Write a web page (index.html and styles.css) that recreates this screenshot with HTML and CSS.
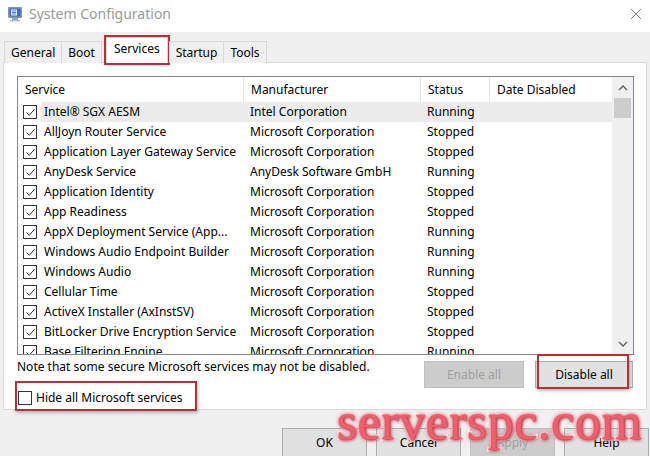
FILE: index.html
```html
<!DOCTYPE html>
<html>
<head>
<meta charset="utf-8">
<link rel="stylesheet" href="styles.css">
</head>
<body>
<div class="window">
  <div class="titlebar">
    <svg class="appicon" width="18" height="18" viewBox="0 0 18 18">
      <rect x="1" y="2" width="14" height="11" rx="1" fill="#8a96a8"/>
      <rect x="2.5" y="3.5" width="11" height="8" fill="#3a6fc4"/>
      <rect x="4" y="4.5" width="6" height="6" fill="#e8eef8"/>
      <line x1="5" y1="6" x2="9" y2="6" stroke="#3a6fc4" stroke-width="0.8"/>
      <line x1="5" y1="7.5" x2="9" y2="7.5" stroke="#3a6fc4" stroke-width="0.8"/>
      <line x1="5" y1="9" x2="9" y2="9" stroke="#3a6fc4" stroke-width="0.8"/>
      <rect x="5" y="13" width="6" height="2" fill="#9aa4b4"/>
      <rect x="3" y="15" width="10" height="1.5" fill="#b8c0cc"/>
    </svg>
    <span class="title">System Configuration</span>
    <svg class="close" width="12" height="12" viewBox="0 0 12 12">
      <path d="M1 1 L11 11 M11 1 L1 11" stroke="#888" stroke-width="1" fill="none"/>
    </svg>
  </div>

  <div class="tabs">
    <div class="tab">General</div>
    <div class="tab">Boot</div>
    <div class="tab selected">Services</div>
    <div class="tab">Startup</div>
    <div class="tab">Tools</div>
  </div>

  <div class="panel">
    <div class="list">
      <div class="listmain">
        <div class="header">
          <div class="hc c1">Service</div>
          <div class="hc c2">Manufacturer</div>
          <div class="hc c3">Status</div>
          <div class="hc c4">Date Disabled</div>
        </div>
        <div class="rows" id="rows"></div>
      </div>
      <div class="scrollbar">
        <div class="sbtn">
          <svg width="10" height="6" viewBox="0 0 10 6"><path d="M1 5 L5 1 L9 5" stroke="#606060" stroke-width="1.3" fill="none"/></svg>
        </div>
        <div class="track"><div class="thumb"></div></div>
        <div class="sbtn">
          <svg width="10" height="6" viewBox="0 0 10 6"><path d="M1 1 L5 5 L9 1" stroke="#606060" stroke-width="1.3" fill="none"/></svg>
        </div>
      </div>
    </div>

    <div class="below">
      <div class="leftcol">
        <div class="note">Note that some secure Microsoft services may not be disabled.</div>
        <div class="hideall">
          <span class="cb"></span>
          <span>Hide all Microsoft services</span>
        </div>
      </div>
      <div class="btns">
        <div class="btn disabled wide">Enable all</div>
        <div class="btn wide">Disable all</div>
      </div>
    </div>

    <div class="mark mark-hide"></div>
    <div class="mark mark-disable"></div>
  </div>

  <div class="footer">
    <div class="btn fbtn">OK</div>
    <div class="btn fbtn">Cancel</div>
    <div class="btn fbtn disabled">Apply</div>
    <div class="btn fbtn">Help</div>
  </div>

  <div class="watermark">serverspc.com</div>
</div>
<script src="script.js"></script>
</body>
</html>
```

FILE: script.js
```js
var data = [
  ["Intel\u00AE SGX AESM", "Intel Corporation", "Running"],
  ["AllJoyn Router Service", "Microsoft Corporation", "Stopped"],
  ["Application Layer Gateway Service", "Microsoft Corporation", "Stopped"],
  ["AnyDesk Service", "AnyDesk Software GmbH", "Running"],
  ["Application Identity", "Microsoft Corporation", "Stopped"],
  ["App Readiness", "Microsoft Corporation", "Stopped"],
  ["AppX Deployment Service (App...", "Microsoft Corporation", "Running"],
  ["Windows Audio Endpoint Builder", "Microsoft Corporation", "Running"],
  ["Windows Audio", "Microsoft Corporation", "Running"],
  ["Cellular Time", "Microsoft Corporation", "Stopped"],
  ["ActiveX Installer (AxInstSV)", "Microsoft Corporation", "Stopped"],
  ["BitLocker Drive Encryption Service", "Microsoft Corporation", "Stopped"],
  ["Base Filtering Engine", "Microsoft Corporation", "Running"]
];
var check = '<svg width="11" height="11" viewBox="0 0 11 11"><path d="M1.5 5.5 L4.3 8.3 L9.5 2.2" stroke="#333" stroke-width="1" fill="none"/></svg>';
var html = "";
data.forEach(function (r, i) {
  html += '<div class="row' + (i === 0 ? ' sel' : '') + '">' +
    '<div class="c1 cell"><span class="cb">' + check + '</span><span class="name">' + r[0] + '</span></div>' +
    '<div class="c2 cell">' + r[1] + '</div>' +
    '<div class="c3 cell">' + r[2] + '</div>' +
    '<div class="c4 cell"></div>' +
    '</div>';
});
document.getElementById("rows").innerHTML = html;
```

FILE: styles.css
```css
* { box-sizing: border-box; }
html, body { margin: 0; padding: 0; }
body {
  width: 650px;
  height: 456px;
  overflow: hidden;
  font-family: "Noto Sans", "Open Sans", sans-serif;
  font-size: 12px;
  color: #000;
  background: #f0f0f0;
}
.window { position: relative; width: 650px; height: 456px; overflow: hidden; }

.titlebar {
  height: 32px;
  background: #fff;
  display: flex;
  align-items: center;
  padding-left: 7px;
}
.appicon { display: block; margin-top: -4px; }
.title {
  margin-left: 4px;
  font-size: 14px;
  color: #9a9a9a;
  margin-top: -5px;
}
.close { margin-left: auto; margin-right: 8px; margin-top: -4px; }

.tabs {
  display: flex;
  align-items: flex-end;
  height: 31px;
  padding-left: 4px;
  position: relative;
  z-index: 2;
  margin-bottom: -1px;
}
.tab {
  height: 22px;
  padding: 0 6px;
  line-height: 22px;
  border: 1px solid #d9d9d9;
  border-bottom: none;
  background: #f0f0f0;
  margin-right: -1px;
}
.tab.selected {
  height: 26px;
  background: #fff;
  margin: 0 1px 0 5px;
  padding: 0 7px;
  line-height: 21px;
  outline: 2px solid #b3303c;
  box-shadow: 1px 2px 3px rgba(0,0,0,0.25);
}

.panel {
  position: relative;
  margin: 0 3px;
  height: 348px;
  background: #fff;
  border: 1px solid #d9d9d9;
  padding: 13px 12px 0 13px;
}

.list {
  width: 617px;
  height: 279px;
  border: 1px solid #828790;
  display: flex;
  overflow: hidden;
}
.listmain { flex: 1; overflow: hidden; }
.header { display: flex; height: 25px; }
.hc {
  padding-left: 7px;
  line-height: 25px;
  border-right: 1px solid #e5e5e5;
}
.hc.c4 { border-right: none; }
.c1 { width: 226px; flex: none; }
.c2 { width: 177px; flex: none; }
.c3 { width: 69px; flex: none; }
.c4 { flex: 1; }

.row { display: flex; height: 20px; line-height: 20px; white-space: nowrap; }
.cell { padding-left: 6px; overflow: hidden; }
.row .c1 { display: flex; align-items: center; padding-left: 5px; }
.row.sel .c2, .row.sel .c3, .row.sel .c4 { background: #ececec; }
.row.sel .name { background: #ececec; flex: 1; padding-left: 3px; margin-left: -3px; }
.cb {
  width: 14px;
  height: 14px;
  border: 1px solid #333;
  background: #fff;
  display: flex;
  align-items: center;
  justify-content: center;
  flex: none;
  margin-right: 7px;
}
.c2.cell, .c3.cell { padding-left: 6px; }

.scrollbar {
  width: 21px;
  background: #f0f0f0;
  display: flex;
  flex-direction: column;
  flex: none;
}
.sbtn { height: 21px; display: flex; align-items: center; justify-content: center; }
.track { flex: 1; }
.thumb { margin: 0 2px; height: 20px; background: #cdcdcd; }

.below { display: flex; }
.leftcol { flex: 1; }
.note { margin-top: 3px; line-height: 18px; }
.hideall {
  display: flex;
  align-items: center;
  margin-top: 13px;
  margin-left: 1px;
}
.hideall .cb { margin-right: 4px; }

.btns { display: flex; gap: 11px; margin-top: 6px; margin-right: 1px; }
.btn {
  height: 27px;
  border: 1px solid #adadad;
  background: #e1e1e1;
  display: flex;
  align-items: center;
  justify-content: center;
}
.btn.wide { width: 100px; }
.btn.wide + .btn.wide { width: 98px; }
.btn.disabled { background: #cccccc; border-color: #bfbfbf; color: #a0a0a0; }

.mark { position: absolute; border: 2px solid #b3303c; box-shadow: 1px 2px 3px rgba(0,0,0,0.25); }
.mark-hide { left: 11px; top: 318px; width: 182px; height: 30px; }
.mark-disable { left: 533px; top: 291px; width: 92px; height: 35px; }

.footer {
  display: flex;
  gap: 9px;
  padding-left: 282px;
  margin-top: 18px;
}
.fbtn { width: 85px; height: 29px; flex: none; }

.watermark {
  position: absolute;
  left: 337px;
  top: 393px;
  font-family: "Liberation Serif", serif;
  font-size: 52px;
  line-height: 58px;
  color: #ef5f6c;
  -webkit-text-stroke: 3.5px #fff;
  paint-order: stroke fill;
  text-shadow: 0 0 2px #d03545, 0 0 4px #d03545, 1px 1px 3px #b02535;
  letter-spacing: 0.5px;
}
```
